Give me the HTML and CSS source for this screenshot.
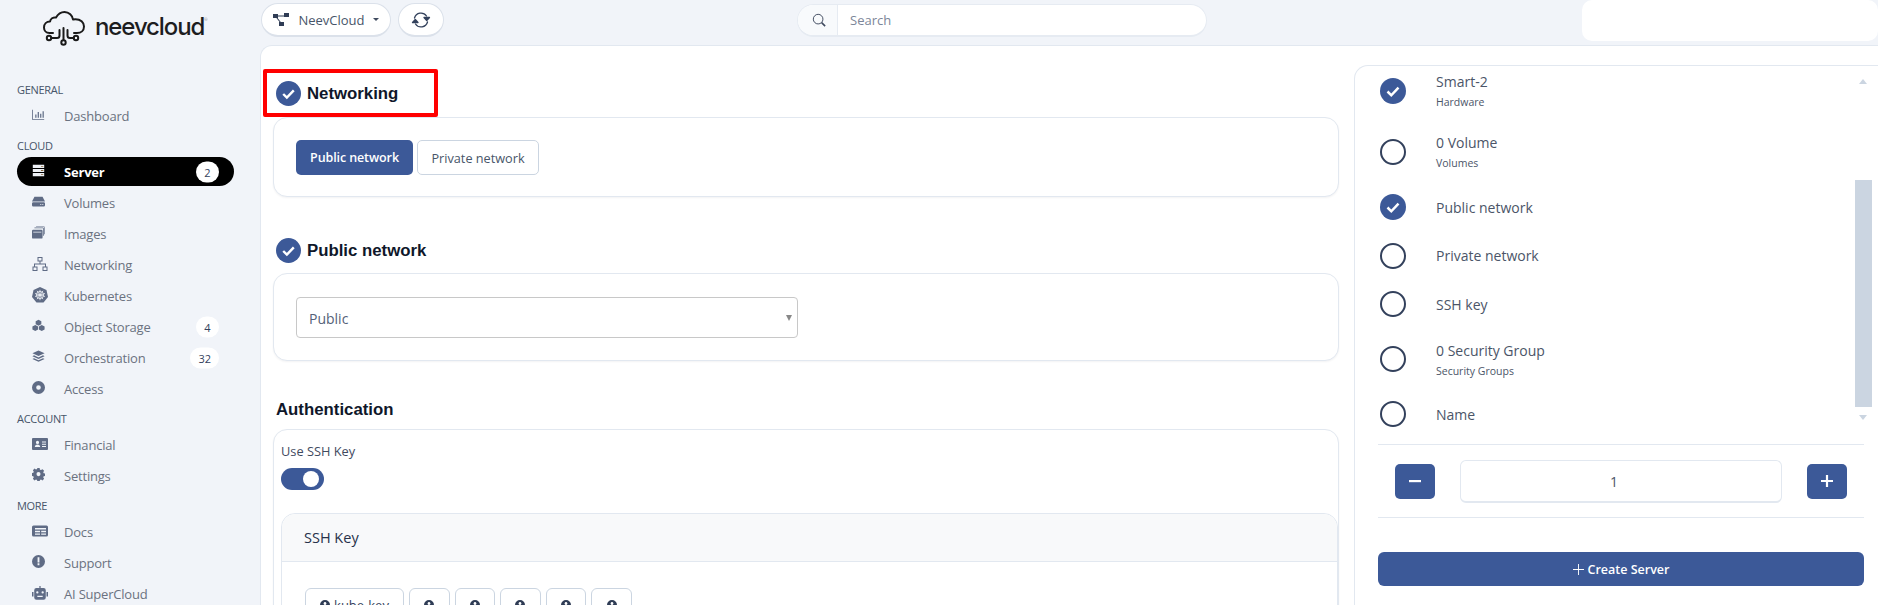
FILE: index.html
```html
<!DOCTYPE html>
<html lang="en">
<head>
<meta charset="utf-8">
<title>NeevCloud</title>
<link rel="stylesheet" href="styles.css">
</head>
<body>
<div class="app">
  <aside class="sidebar">
    <div class="logo">
      <svg class="logo-mark" viewBox="0 0 42 36" fill="none" stroke="#1a1a1a" stroke-width="2" stroke-linecap="round" stroke-linejoin="round"><path d="M10 22H6.500C3 22 1 19.500 1 16.500C1 13 3.500 10.500 7 10.500C7.500 8 10 6 13 6.500C15 3 18 1 21.500 1C26 1 29.500 4.500 30 8.500C30.500 8.300 31.500 8.200 32.500 8.200C37.500 8.200 41 11.500 41 15.500C41 19.500 38 22 34 22H31"/><path d="M8.500 27H14C15.500 27 16.500 26 16.500 24.500V19"/><path d="M20.500 29V17"/><path d="M30.500 27H27C25.500 27 24.500 26 24.500 24.500V19"/><circle cx="6" cy="27" r="2.200"/><circle cx="20.500" cy="31.500" r="2.200"/><circle cx="33" cy="27" r="2.200"/></svg>
      <span class="logo-text">neevcloud</span><span class="logo-reg">®</span>
    </div>
    <nav class="nav">
      <div class="nav-label">GENERAL</div>
      <a class="nav-item"><svg class="nav-icon sm" viewBox="0 0 16 16"><path d="M1 2v11.500h14v1H0V2z"/><path d="M4 8h1.500v4H4zM7 5h1.500v7H7zM10 7h1.500v5H10zM13 4h1.500v8H13z"/></svg><span>Dashboard</span></a>
      <div class="nav-label">CLOUD</div>
      <a class="nav-item active"><svg class="nav-icon sm" viewBox="0 0 16 16"><path d="M1 1h14v3.800H1zM1 6.100h14v3.800H1zM1 11.200h14V15H1z"/><path class="dots" d="M11 2.400h3v1h-3zM11 7.500h3v1h-3zM11 12.600h3v1h-3z"/></svg><span>Server</span><b class="badge">2</b></a>
      <a class="nav-item"><svg class="nav-icon sm" viewBox="0 0 16 16"><path d="M3 2h10l3 6H0z"/><path d="M1.500 9h13A1.500 1.500 0 0 1 16 10.500v2a1.500 1.500 0 0 1-1.500 1.500h-13A1.500 1.500 0 0 1 0 12.500v-2A1.500 1.500 0 0 1 1.500 9zM10 11v1h1.500v-1zm2.500 0v1H14v-1z" fill-rule="evenodd"/></svg><span>Volumes</span></a>
      <a class="nav-item"><svg class="nav-icon sm" viewBox="0 0 16 16"><path d="M1.500 4.500h10A1.500 1.500 0 0 1 13 6v8a1.500 1.500 0 0 1-1.500 1.500h-10A1.500 1.500 0 0 1 0 14V6a1.500 1.500 0 0 1 1.500-1.500zM1.500 7v1h10V7z" fill-rule="evenodd"/><path d="M3 2.700h10.500V12h1V2.700a1 1 0 0 0-1-1H3zM5 .5h9.500a1.500 1.500 0 0 1 1.500 1.500v8h-.800V1.300H5z"/></svg><span>Images</span></a>
      <a class="nav-item"><svg class="nav-icon" viewBox="0 0 16 16"><path d="M5.500 1h5v4.500h-5zm1 1v2.500h3V2zM.5 10.500h5V15h-5zm1 1V14h3v-2.500zM10.500 10.500h5V15h-5zm1 1V14h3v-2.500zM7.500 5.500h1v2h5.500v3h-1v-2H3v2H2v-3h5.500z" fill-rule="evenodd"/></svg><span>Networking</span></a>
      <a class="nav-item"><svg class="nav-icon" viewBox="0 0 16 16"><path d="M8 0l6.500 3 1.500 7-4.500 5.500h-7L0 10l1.500-7z"/><g fill="none" stroke="#f1f4f9" stroke-width=".8"><circle cx="8" cy="8" r="3.600"/><path d="M8 2.800v10.400M3 6.500l10 3M13 6.500l-10 3M5 3.800l6 8.400M11 3.800l-6 8.400"/></g></svg><span>Kubernetes</span></a>
      <a class="nav-item"><svg class="nav-icon sm" viewBox="0 0 16 14"><path d="M8 0l3.500 1.800v3.700L8 7.300 4.500 5.500V1.800zM4 6.500l3.500 1.800V12L4 13.800.5 12V8.300zM12 6.500l3.500 1.800V12L12 13.800 8.500 12V8.300z"/></svg><span>Object Storage</span><b class="badge">4</b></a>
      <a class="nav-item"><svg class="nav-icon sm" viewBox="0 0 16 16"><path d="M8 .5l7.500 3.500L8 7.500.5 4z"/><path d="M2.500 6.600L8 9.200l5.500-2.600 2 1L8 11.100.5 7.600z"/><path d="M2.500 10.100L8 12.700l5.500-2.600 2 1L8 14.600.5 11.100z"/></svg><span>Orchestration</span><b class="badge">32</b></a>
      <a class="nav-item"><svg class="nav-icon sm" viewBox="1 1 14 14"><path d="M8 1a7 7 0 1 1 0 14A7 7 0 0 1 8 1zm0 4.500a2.500 2.500 0 1 0 0 5 2.500 2.500 0 0 0 0-5z" fill-rule="evenodd"/></svg><span>Access</span></a>
      <div class="nav-label">ACCOUNT</div>
      <a class="nav-item"><svg class="nav-icon" viewBox="0 0 16 16"><path d="M1 2h14a1 1 0 0 1 1 1v10a1 1 0 0 1-1 1H1a1 1 0 0 1-1-1V3a1 1 0 0 1 1-1zm4.500 2.800a1.600 1.600 0 1 0 0 3.200 1.600 1.600 0 0 0 0-3.200zM2.800 11h5.400c0-1.500-1.200-2.400-2.700-2.400S2.800 9.500 2.800 11zM10 5.500v1h4v-1zm0 2.200v1h4v-1zm0 2.200v1h4v-1z" fill-rule="evenodd"/></svg><span>Financial</span></a>
      <a class="nav-item"><svg class="nav-icon sm" viewBox="0 0 16 16"><path d="M6.600 0h2.800l.4 2 1.300.6 1.800-1.100 2 2-1.100 1.800.6 1.300 2 .4v2.800l-2 .4-.6 1.300 1.100 1.800-2 2-1.800-1.100-1.300.6-.4 2H6.600l-.4-2-1.300-.6-1.800 1.100-2-2 1.100-1.800-.6-1.300-2-.4V6.200l2-.4.6-1.300-1.100-1.800 2-2 1.800 1.100 1.300-.6zM8 5a2.500 2.500 0 1 0 0 5 2.500 2.500 0 0 0 0-5z" fill-rule="evenodd"/></svg><span>Settings</span></a>
      <div class="nav-label">MORE</div>
      <a class="nav-item"><svg class="nav-icon" viewBox="0 0 16 16"><path d="M1.500 2.500h13A1.500 1.500 0 0 1 16 4v8a1.500 1.500 0 0 1-1.500 1.500h-13A1.500 1.500 0 0 1 0 12V4a1.500 1.500 0 0 1 1.500-1.500zM3 5v1.500h11V5zm0 2.800v1.400h5V7.800zm6.200 0v1.400H14V7.800zM3 10.400v1.300h5v-1.300zm6.200 0v1.300H14v-1.300z" fill-rule="evenodd"/></svg><span>Docs</span></a>
      <a class="nav-item"><svg class="nav-icon sm" viewBox="1 1 14 14"><path d="M8 1a7 7 0 1 1 0 14A7 7 0 0 1 8 1zM7 3.500v5.500h2V3.500zm0 6.500v2h2v-2z" fill-rule="evenodd"/></svg><span>Support</span></a>
      <a class="nav-item"><svg class="nav-icon" viewBox="0 0 18 16"><path d="M8.300 0h1.400v2.500H8.300z"/><path d="M5 2.500h8A2.500 2.500 0 0 1 15.500 5v8a2.500 2.500 0 0 1-2.500 2.500H5A2.500 2.500 0 0 1 2.500 13V5A2.500 2.500 0 0 1 5 2.500zm1 3.500a1.300 1.300 0 1 0 0 2.600A1.300 1.300 0 0 0 6 6zm6 0a1.300 1.300 0 1 0 0 2.600A1.300 1.300 0 0 0 12 6zm-6 5v1.500h6V11z" fill-rule="evenodd"/><path d="M0 7h1.700v5H0zM16.300 7H18v5h-1.700z"/></svg><span>AI SuperCloud</span></a>
    </nav>
  </aside>

  <div class="workspace">
    <header class="topbar">
      <button class="pill org"><svg class="org-icon" viewBox="0 0 16 14"><path d="M0 1h5v4H0zM11 0h5v4h-5zM6 9h5v4H6z"/><path d="M4 2.500h8v1H4zM3 4.500l4 5 .8-.6-4-5z"/></svg><span>NeevCloud</span><i class="caret"></i></button>
      <button class="pill refresh"><svg viewBox="0 0 20 20" fill="none" stroke="#33415c" stroke-width="1.300" stroke-linecap="round" stroke-linejoin="round"><path d="M3.500 8A6.700 6.700 0 0 1 15.500 6"/><path d="M16.500 12a6.700 6.700 0 0 1-12 2"/><path d="M18.500 7.500h-5.500l2.700 3z" fill="#33415c"/><path d="M1.500 12.500h5.500l-2.700-3z" fill="#33415c"/></svg></button>
      <div class="search">
        <div class="search-icon"><svg viewBox="0 0 16 16" fill="none" stroke="#3f4a5f" stroke-width="1.100"><circle cx="7" cy="7" r="5.500"/><path d="M11 11l4 4" stroke-width="1.800"/></svg></div>
        <div class="search-text">Search</div>
      </div>
      <div class="account"></div>
    </header>

    <main class="content">
      <section class="form-col">
        <h2 class="heading heading-first"><svg class="check" viewBox="0 0 26 26"><use href="#tick"/></svg>Networking</h2>
        <div class="highlight"></div>
        <div class="card card-net">
          <button class="btn btn-primary">Public network</button>
          <button class="btn btn-outline">Private network</button>
        </div>

        <h2 class="heading heading-public"><svg class="check" viewBox="0 0 26 26"><use href="#tick"/></svg>Public network</h2>
        <div class="card card-select">
          <div class="select"><span>Public</span><i class="select-arrow"></i></div>
        </div>

        <h2 class="heading heading-auth">Authentication</h2>
        <div class="card card-auth">
          <div class="field-label">Use SSH Key</div>
          <div class="toggle"><i></i></div>
          <div class="inner-card">
            <div class="inner-head">SSH Key</div>
            <div class="inner-body">
              <button class="key-btn key-wide"><svg class="key" viewBox="0 0 12 12"><use href="#keyglyph"/></svg>kube-key</button>
              <button class="key-btn"><svg class="key" viewBox="0 0 12 12"><use href="#keyglyph"/></svg></button>
              <button class="key-btn"><svg class="key" viewBox="0 0 12 12"><use href="#keyglyph"/></svg></button>
              <button class="key-btn"><svg class="key" viewBox="0 0 12 12"><use href="#keyglyph"/></svg></button>
              <button class="key-btn"><svg class="key" viewBox="0 0 12 12"><use href="#keyglyph"/></svg></button>
              <button class="key-btn"><svg class="key" viewBox="0 0 12 12"><use href="#keyglyph"/></svg></button>
            </div>
          </div>
        </div>
      </section>

      <aside class="summary">
        <div class="steps">
          <div class="scrollbar"><i class="arrow-up"></i><i class="thumb"></i><i class="arrow-down"></i></div>
          <div class="step step-hw"><svg class="step-icon" viewBox="0 0 26 26"><use href="#tick"/></svg><div><div class="step-title">Smart-2</div><div class="step-sub">Hardware</div></div></div>
          <div class="step step-vol"><i class="step-empty"></i><div><div class="step-title">0 Volume</div><div class="step-sub">Volumes</div></div></div>
          <div class="step step-pub"><svg class="step-icon" viewBox="0 0 26 26"><use href="#tick"/></svg><div class="step-title">Public network</div></div>
          <div class="step step-priv"><i class="step-empty"></i><div class="step-title">Private network</div></div>
          <div class="step step-ssh"><i class="step-empty"></i><div class="step-title">SSH key</div></div>
          <div class="step step-sec"><i class="step-empty"></i><div><div class="step-title">0 Security Group</div><div class="step-sub">Security Groups</div></div></div>
          <div class="step step-name"><i class="step-empty"></i><div class="step-title">Name</div></div>
        </div>
        <div class="qty">
          <button class="qty-btn"><svg viewBox="0 0 12 12"><path d="M0 5h12v2.200H0z"/></svg></button>
          <div class="qty-input">1</div>
          <button class="qty-btn"><svg viewBox="0 0 12 12"><path d="M4.900 0h2.200v4.900H12v2.200H7.100V12H4.900V7.100H0V4.900h4.900z"/></svg></button>
        </div>
        <button class="create"><svg viewBox="0 0 12 12"><path d="M5.500 0h1v5.500H12v1H6.500V12h-1V6.500H0v-1h5.500z"/></svg>Create Server</button>
      </aside>
    </main>
  </div>
</div>

<svg class="defs" width="0" height="0">
  <symbol id="tick" viewBox="0 0 26 26"><circle cx="13" cy="13" r="13" fill="#3c5998"/><path d="M7.500 13.500l3.800 3.800 7.200-7.600" fill="none" stroke="#fff" stroke-width="2.500"/></symbol>
  <symbol id="keyglyph" viewBox="0 0 12 12"><path d="M6 0a6 6 0 1 1 0 12A6 6 0 0 1 6 0zm0 2.500a1.700 1.700 0 0 0-.7 3.250V9.500h1.400V5.750A1.700 1.700 0 0 0 6 2.500z" fill="#2f3c55" fill-rule="evenodd"/></symbol>
</svg>
</body>
</html>
```

FILE: styles.css
```css
* { box-sizing: border-box; }
html, body { margin: 0; height: 605px; overflow: hidden; }
body { background: #f1f4f9; font-family: "Open Sans", "Noto Sans", sans-serif; color: #33415c; }
button { font-family: inherit; cursor: pointer; }
.defs { display: block; height: 0; }
.app { display: flex; height: 605px; overflow: hidden; }

.sidebar { width: 260px; flex: none; padding: 0 26px 0 17px; }
.logo { height: 71px; display: flex; align-items: flex-start; padding: 11px 0 0 26px; }
.logo-mark { width: 42px; height: 36px; flex: none; }
.logo-text { font-family: Inter, "Liberation Sans", sans-serif; font-size: 24px; line-height: 28px; font-weight: 500; color: #1d1d1f; margin: 2px 0 0 10px; letter-spacing: -1.1px; }
.logo-reg { font-size: 4px; color: #888; margin-top: 6px; }
.nav { display: flex; flex-direction: column; }
.nav-label { font-size: 11px; letter-spacing: -.3px; line-height: 16px; height: 16px; color: #475569; margin: 7px 0 2px; }
.nav-label:first-child { margin-top: 11px; }
.nav-item { height: 31px; display: flex; align-items: center; padding-left: 15px; color: #6b7280; font-size: 13px; letter-spacing: -.2px; position: relative; }
.nav-icon { width: 16px; height: 16px; margin: -2px 16px 0 0; fill: #5f6b85; flex: none; }
.nav-icon.sm { width: 13px; height: 13px; margin-right: 19px; }
.nav-item.active { height: 29px; margin: 1px 0; background: #000; color: #fff; font-weight: 700; border-radius: 15px; }
.nav-item.active .nav-icon { fill: #eef1f6; }
.nav-item.active .dots { fill: #8a6a3c; }
.badge { position: absolute; right: 15px; top: 50%; transform: translateY(-50%); min-width: 23px; padding: 0 8px; height: 21px; line-height: 21px; border-radius: 11px; background: #fff; color: #33415c; font-size: 11px; font-weight: 400; letter-spacing: 0; text-align: center; }

.workspace { flex: 1; min-width: 0; display: flex; flex-direction: column; }
.topbar { height: 45px; flex: none; display: flex; align-items: flex-start; padding: 3px 0 0 1px; }
.pill { height: 34px; border: 1px solid #dbe1ea; border-bottom-width: 2px; border-radius: 17px; background: #fff; display: flex; align-items: center; justify-content: center; color: #475569; font-size: 13px; padding: 0; }
.org { width: 130px; }
.org-icon { width: 16px; height: 14px; fill: #2f3c55; margin-right: 9px; }
.caret { width: 0; height: 0; border: 3.500px solid transparent; border-top-color: #3f4a5f; border-bottom-width: 0; margin-left: 8px; }
.refresh { width: 46px; margin-left: 7px; }
.refresh svg { width: 20px; height: 20px; }
.search { margin-left: 353px; width: 410px; height: 33px; margin-top: 1px; display: flex; border: 1px solid #e6ebf2; border-bottom-width: 2px; border-radius: 17px; background: #fff; overflow: hidden; }
.search-icon { width: 40px; background: #f8fafc; border-right: 1px solid #e6ebf2; display: flex; align-items: center; justify-content: center; padding-left: 2px; }
.search-icon svg { width: 14px; height: 14px; }
.search-text { padding-left: 12px; font-size: 13px; line-height: 31px; color: #7c8699; }
.account { margin-left: auto; margin-top: -3px; width: 296px; height: 41px; background: #fff; border-radius: 10px; }

.content { flex: 1; background: #fff; border-top: 1px solid #e2e8f0; border-left: 1px solid #e2e8f0; border-top-left-radius: 12px; display: flex; min-height: 0; }
.form-col { width: 1079px; flex: none; padding: 0 0 0 12px; position: relative; }
.heading { margin: 0; display: flex; align-items: center; font-family: "Liberation Sans", Arial, sans-serif; font-weight: 700; font-size: 16.800px; color: #0f172a; height: 25px; }
.check { width: 25px; height: 25px; margin: 0 6px 0 3px; flex: none; }
.heading-first { margin-top: 35px; margin-bottom: 11px; }
.heading-public { margin-top: 41px; margin-bottom: 10px; }
.heading-auth { margin-top: 36px; margin-bottom: 7px; padding-left: 3px; }
.highlight { position: absolute; left: 2px; top: 23px; width: 175px; height: 48px; border: 4px solid #f00; border-radius: 2px; }
.card { border: 1px solid #e2e8f0; border-radius: 14px; box-shadow: 0 1px 2px rgba(15, 23, 42, .05); width: 1066px; background: #fff; }
.card-net { height: 80px; padding: 22px 0 0 22px; display: flex; gap: 4px; align-items: flex-start; }
.btn { height: 35px; border-radius: 5px; padding: 0; }
.btn-primary { width: 117px; background: #3c5998; color: #fff; border: 0; font-weight: 600; font-size: 12.500px; letter-spacing: -.1px; }
.btn-outline { width: 122px; background: #fff; color: #475569; border: 1px solid #cbd5e1; font-size: 12.700px; }
.card-select { height: 88px; padding: 23px 0 0 22px; }
.select { width: 502px; height: 41px; border: 1px solid #c8c8c8; border-radius: 4px; padding: 0 0 0 12px; display: flex; align-items: center; justify-content: space-between; font-size: 14px; color: #556178; }
.select span { margin-top: 2px; }
.select-arrow { width: 0; height: 0; border: 3.500px solid transparent; border-top: 6px solid #888; border-bottom: 0; margin-right: 5px; }
.card-auth { height: 200px; padding: 13px 0 0 7px; }
.field-label { font-size: 12.800px; color: #3f4a5f; line-height: 17px; height: 17px; }
.toggle { width: 43px; height: 22px; border-radius: 11px; background: #3c5998; margin-top: 8px; position: relative; }
.toggle i { position: absolute; right: 5px; top: 3px; width: 16px; height: 16px; border-radius: 50%; background: #fff; }
.inner-card { width: 1057px; margin-top: 23px; border: 1px solid #e2e8f0; border-radius: 14px 14px 0 0; }
.inner-head { height: 48px; background: #f8f9fa; border-bottom: 1px solid #e2e8f0; border-radius: 14px 14px 0 0; font-size: 14.500px; line-height: 47px; padding-left: 22px; color: #27324a; }
.inner-body { display: flex; gap: 5px; padding: 26px 0 0 23px; }
.key-btn { width: 40.600px; height: 36px; background: #fff; border: 1px solid #cbd5e1; border-radius: 6px; font-size: 13px; color: #33415c; padding: 7px 0 0; display: flex; justify-content: center; align-items: flex-start; line-height: 18px; flex: none; }
.key-wide { width: 99px; }
.key { width: 10px; height: 10px; margin-top: 4px; flex: none; }
.key-wide .key { margin-right: 4px; }

.summary { margin: 19px 0 0 14px; flex: 1; min-width: 0; border-top: 1px solid #e2e8f0; border-left: 1px solid #e2e8f0; border-top-left-radius: 14px; }
.steps { height: 362px; position: relative; overflow: hidden; }
.step { display: flex; align-items: center; position: absolute; left: 25px; }
.step-icon { width: 26px; height: 26px; flex: none; margin-right: 30px; }
.step-empty { width: 26px; height: 26px; flex: none; margin-right: 30px; border: 2.500px solid #33415c; border-radius: 50%; }
.step-sec .step-empty { margin-top: -2px; }
.step-title { font-size: 14px; line-height: 19px; color: #4b5568; }
.step-sub { font-size: 10.500px; line-height: 14px; color: #4b5568; margin-top: 4px; }
.step-hw { top: 6px; } .step-vol { top: 67px; } .step-pub { top: 128px; } .step-priv { top: 176.500px; }
.step-ssh { top: 225px; } .step-sec { top: 275px; } .step-name { top: 335px; }
.scrollbar { position: absolute; right: 6px; top: 0; width: 17px; height: 362px; }
.scrollbar i { position: absolute; display: block; }
.arrow-up { left: 4px; top: 13px; width: 0; height: 0; border: 4.500px solid transparent; border-bottom: 5px solid #cbd5e1; border-top: 0; }
.arrow-down { left: 4px; top: 349px; width: 0; height: 0; border: 4.500px solid transparent; border-top: 5px solid #cbd5e1; border-bottom: 0; }
.thumb { left: 0; top: 114px; width: 17px; height: 227px; background: #cbd5e1; }
.qty { width: 486px; height: 74px; margin: 16px 0 0 23px; border-top: 1px solid #e2e8f0; border-bottom: 1px solid #e2e8f0; display: flex; align-items: center; justify-content: space-between; padding: 0 17px; }
.qty-btn { width: 40px; height: 35px; background: #3c5998; border: 0; border-radius: 5px; display: flex; align-items: center; justify-content: center; padding: 0; }
.qty-btn svg { width: 12px; height: 12px; fill: #fff; }
.qty-input { width: 322px; height: 43px; border: 1px solid #e2e8f0; border-bottom-width: 2px; border-radius: 6px; text-align: center; font-size: 14px; line-height: 41px; color: #4b5568; padding-right: 14px; }
.create { display: flex; align-items: center; justify-content: center; width: 486px; height: 34px; margin: 34px 0 0 23px; background: #3c5998; color: #fff; border: 0; border-radius: 6px; font-size: 12.500px; font-weight: 600; }
.create svg { width: 11px; height: 11px; fill: #fff; margin-right: 4px; }
```
